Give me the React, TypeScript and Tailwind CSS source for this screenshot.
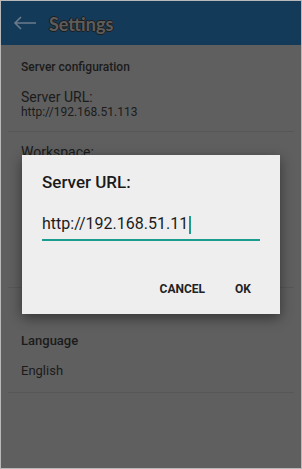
import React from "react"

export default function App() {
  return (
    <div
      className="relative h-[469px] w-[302px] overflow-hidden border border-[#b9b9b9] bg-[#5f5f5f]"
      style={{ fontFamily: "Roboto, 'Liberation Sans', sans-serif" }}
    >
      {/* Toolbar */}
      <div className="flex h-[44px] items-center bg-[#143a5a]">
        <svg width="24" height="14" viewBox="0 0 24 14" className="ml-[12px]">
          <path d="M23 7H2M8 1L2 7l6 6" fill="none" stroke="#6b7b8a" strokeWidth="1.6" />
        </svg>
        <span
          className="ml-[12px] mt-[3px] text-[18px] font-bold text-[#5c5c5c]"
          style={{
            fontFamily: "Lato, 'Open Sans', sans-serif",
            textShadow: "1px 0 0 #1e1e1e, -1px 0 0 #1e1e1e, 0 1px 0 #1e1e1e, 0 -1px 0 #1e1e1e",
          }}
        >
          Settings
        </span>
      </div>

      {/* Preference list */}
      <div className="flex flex-col text-[#1b1b1b]">
        <div className="px-[20px] pt-[14px] text-[12px] leading-[16px] font-medium">Server configuration</div>
        <div className="mt-[14px] px-[20px] text-[14px] leading-[16px]">Server URL:</div>
        <div className="px-[20px] text-[12px] leading-[15px]">http://192.168.51.113</div>
        <div className="mx-[7px] mt-[11px] h-px bg-[#575757]" />
        <div className="px-[20px] pt-[12px] text-[14px] leading-[16px]">Workspace:</div>
        <div className="h-[127px]" />
        <div className="mx-[7px] h-px bg-[#575757]" />
        <div className="h-[45px]" />
        <div className="px-[20px] text-[13px] leading-[16px] font-medium">Language</div>
        <div className="mt-[14px] px-[20px] text-[13px] leading-[16px]">English</div>
        <div className="mx-[7px] mt-[13px] h-px bg-[#575757]" />
      </div>

      {/* Dialog */}
      <div className="absolute left-[21px] top-[154px] h-[159px] w-[258px] bg-[#eeeeee] shadow-[0_4px_12px_rgba(0,0,0,0.45)]">
        <div className="px-[20px] pt-[17px] text-[17px] leading-[20px] font-medium text-[#1a1a1a]">Server URL:</div>
        <div className="mx-[20px] mt-[22px] flex h-[27px] items-start border-b-2 border-[#1a9c8f]">
          <span className="text-[16px] leading-[20px] text-[#1c1c1c]">http://192.168.51.11</span>
          <span className="ml-px mt-[2px] h-[18px] w-[1.5px] bg-[#1a9c8f]" />
        </div>
        <div className="mt-[41px] flex justify-end gap-[30px] pr-[29px] text-[12px] leading-[14px] font-bold text-[#222]">
          <span>CANCEL</span>
          <span>OK</span>
        </div>
      </div>
    </div>
  )
}
